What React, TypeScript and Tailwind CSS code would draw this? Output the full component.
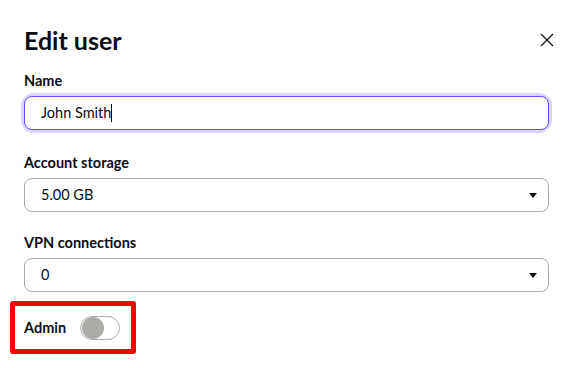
import React from "react";

export default function App() {
  return (
    <div className="w-[578px] h-[368px] bg-white text-[#0c0c14] overflow-hidden" style={{ fontFamily: "Lato, 'Noto Sans', sans-serif" }}>
      <div className="pl-6 pr-[29px] pt-[24px]">
        <div className="flex items-start justify-between">
          <h1 className="text-[25px] leading-[32px] font-bold">Edit user</h1>
          <button className="mt-[6px] mr-[-8px] w-5 h-5 flex items-center justify-center text-[#0c0c14]">
            <svg width="14" height="14" viewBox="0 0 14 14" fill="none" stroke="currentColor" strokeWidth="1.2">
              <path d="M1 1L13 13M13 1L1 13" />
            </svg>
          </button>
        </div>
        <div className="mt-[15px]">
          <label className="block text-[14.5px] leading-[20px] font-bold">Name</label>
          <div className="mt-[5px] rounded-[10px] ring-[3px] ring-[#dcd6ff]">
            <div className="h-[34px] rounded-[8px] border border-[#6d4aff] flex items-center px-4 text-[14.5px]">
              <span>John Smith</span>
              <span className="inline-block w-px h-[18px] bg-black" />
            </div>
          </div>
        </div>
        <div className="mt-[23px]">
          <label className="block text-[14.5px] leading-[20px] font-bold">Account storage</label>
          <div className="mt-[5px] h-[34px] rounded-[8px] border border-[#adadad] flex items-center justify-between pl-4 pr-[11px] text-[14.5px]">
            <span>5.00 GB</span>
            <svg width="8" height="5" viewBox="0 0 8 5"><path d="M0 0H8L4 5Z" fill="#0c0c14" /></svg>
          </div>
        </div>
        <div className="mt-[21px]">
          <label className="block text-[14.5px] leading-[20px] font-bold">VPN connections</label>
          <div className="mt-[5px] h-[34px] rounded-[8px] border border-[#adadad] flex items-center justify-between pl-4 pr-[11px] text-[14.5px]">
            <span>0</span>
            <svg width="8" height="5" viewBox="0 0 8 5"><path d="M0 0H8L4 5Z" fill="#0c0c14" /></svg>
          </div>
        </div>
      </div>
      <div className="ml-[10px] mt-[9px] w-[126px] h-[53px] border-[5px] border-[#ff0000] rounded-[3px] flex items-center pl-[9px]">
        <span className="text-[14.5px] font-bold">Admin</span>
        <div className="ml-[14px] w-[40px] h-[24px] rounded-full border border-[#adadad] bg-white flex items-center pl-[1px]">
          <div className="w-[22px] h-[22px] rounded-full bg-[#adaba8]" />
        </div>
      </div>
    </div>
  );
}
